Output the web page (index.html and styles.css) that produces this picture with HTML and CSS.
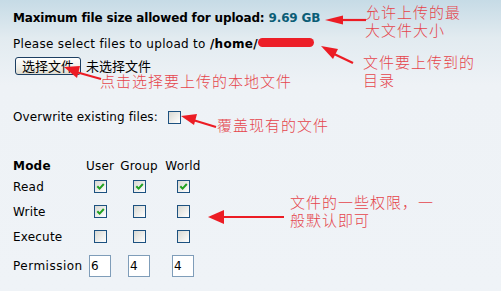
FILE: index.html
```html
<!DOCTYPE html>
<html lang="zh-CN">
<head>
    <meta charset="UTF-8">
    <meta name="viewport" content="width=device-width, initial-scale=1.0">
    <title>Upload files</title>
    <link rel="stylesheet" href="styles.css">
</head>
<body>
    <div class="upload-form">
        <p class="max-size">Maximum file size allowed for upload: <span class="size-value">9.69 GB</span></p>
        <p class="target">Please select files to upload to <strong>/home/<span class="masked"></span></strong></p>
        <div class="file-row">
            <span class="file-button">选择文件</span>
            <span class="file-name">未选择文件</span>
        </div>

        <div class="overwrite">
            <span>Overwrite existing files:</span>
            <span class="cb"></span>
        </div>

        <div class="perm-grid">
            <span class="mode-label">Mode</span>
            <span class="col-head">User</span>
            <span class="col-head">Group</span>
            <span class="col-head">World</span>

            <span>Read</span>
            <span class="cell"><span class="cb checked"><svg viewBox="0 0 11 11"><polyline points="2.3,5.2 4.6,7.6 8.8,3"/></svg></span></span>
            <span class="cell"><span class="cb checked"><svg viewBox="0 0 11 11"><polyline points="2.3,5.2 4.6,7.6 8.8,3"/></svg></span></span>
            <span class="cell"><span class="cb checked"><svg viewBox="0 0 11 11"><polyline points="2.3,5.2 4.6,7.6 8.8,3"/></svg></span></span>

            <span>Write</span>
            <span class="cell"><span class="cb checked"><svg viewBox="0 0 11 11"><polyline points="2.3,5.2 4.6,7.6 8.8,3"/></svg></span></span>
            <span class="cell"><span class="cb"></span></span>
            <span class="cell"><span class="cb"></span></span>

            <span>Execute</span>
            <span class="cell"><span class="cb"></span></span>
            <span class="cell"><span class="cb"></span></span>
            <span class="cell"><span class="cb"></span></span>

            <span class="perm-label">Permission</span>
            <span class="cell"><span class="num-box">6</span></span>
            <span class="cell"><span class="num-box">4</span></span>
            <span class="cell"><span class="num-box">4</span></span>
        </div>
    </div>

    <!-- annotations drawn over the screenshot -->
    <div class="notes">
        <span class="note note-size">允许上传的最<br>大文件大小</span>
        <span class="note note-dir">文件要上传到的<br>目录</span>
        <span class="note note-pick">点击选择要上传的本地文件</span>
        <span class="note note-over">覆盖现有的文件</span>
        <span class="note note-perm">文件的一些权限，一<br>般默认即可</span>
        <svg class="arrows" width="501" height="291" viewBox="0 0 501 291">
            <line x1="340" y1="20" x2="366" y2="20"/>
            <polygon points="325,20 343,15.5 343,24.5"/>

            <line x1="332" y1="53" x2="353" y2="63"/>
            <polygon points="321,46 338,49 333,59"/>

            <line x1="76" y1="72" x2="101" y2="79"/>
            <polygon points="64,67 80,66 77,78"/>

            <line x1="193" y1="120" x2="216" y2="127"/>
            <polygon points="181,116 197,114 194,125"/>

            <line x1="220" y1="217" x2="284" y2="217"/>
            <polygon points="208,217 224,210 224,224"/>
        </svg>
    </div>
</body>
</html>
```

FILE: styles.css
```css
body {
    margin: 0;
    width: 501px;
    height: 291px;
    overflow: hidden;
    position: relative;
    font-family: "DejaVu Sans", Verdana, sans-serif;
    font-size: 12px;
    color: #000;
    background: linear-gradient(to bottom, #c6dbe6 0, #e2ebf0 38px, #eef2f6 85px, #eff3f7 100%);
}
.upload-form {
    padding: 10px 13px;
}
.upload-form p {
    margin: 0;
    line-height: 16px;
}
.max-size {
    font-weight: bold;
    letter-spacing: -0.15px;
}
.size-value {
    color: #0b5d76;
}
.target {
    margin-top: 10px !important;
    letter-spacing: 0.3px;
}
.masked {
    display: inline-block;
    width: 56px;
    height: 9px;
    border-radius: 5px;
    background-color: #ec1f28;
    vertical-align: 1px;
}
.file-row {
    display: flex;
    align-items: center;
    gap: 5px;
    margin-top: 5px;
    margin-left: 2px;
}
.file-button {
    box-sizing: border-box;
    width: 66px;
    height: 18px;
    border: 1px solid #1d3f62;
    border-radius: 3px;
    background: linear-gradient(to bottom, #ffffff, #f0efe8 60%, #dedbd0);
    font-family: "Noto Sans CJK SC", sans-serif;
    font-size: 13px;
    line-height: 16px;
    text-align: center;
}
.file-name {
    font-family: "Noto Sans CJK SC", sans-serif;
    font-size: 13px;
    line-height: 16px;
}
.overwrite {
    display: flex;
    align-items: center;
    gap: 10px;
    margin-top: 34px;
    line-height: 16px;
    letter-spacing: 0.1px;
}
.cb {
    box-sizing: border-box;
    display: inline-flex;
    align-items: center;
    justify-content: center;
    width: 13px;
    height: 13px;
    border: 1px solid #1c5180;
    background: linear-gradient(135deg, #d8d8d2, #ffffff);
}
.cb svg {
    width: 11px;
    height: 11px;
}
.cb polyline {
    fill: none;
    stroke: #21a121;
    stroke-width: 2;
}
.perm-grid {
    display: grid;
    grid-template-columns: 67px 28px 38px 38px;
    grid-template-rows: 16px 25px 25px 25px 33px;
    column-gap: 6px;
    align-items: center;
    margin-top: 33px;
    letter-spacing: 0.2px;
}
.mode-label {
    font-weight: bold;
}
.perm-label {
    letter-spacing: 0.5px;
}
.col-head {
    text-align: center;
}
.cell {
    display: flex;
    justify-content: center;
}
.num-box {
    box-sizing: border-box;
    width: 22px;
    height: 22px;
    padding-left: 1px;
    border: 1px solid #7f9db9;
    background-color: #fff;
    line-height: 20px;
}
.notes {
    position: absolute;
    left: 0;
    top: 0;
    width: 501px;
    height: 291px;
}
.note {
    position: absolute;
    font-family: "Noto Sans CJK SC", sans-serif;
    font-size: 15px;
    font-weight: 300;
    letter-spacing: 1px;
    line-height: 18px;
    color: #e5454c;
    white-space: nowrap;
}
.note-size { left: 365px; top: 3px; }
.note-dir { left: 363px; top: 53px; }
.note-pick { left: 100px; top: 72px; }
.note-over { left: 217px; top: 116px; }
.note-perm { left: 290px; top: 193px; }
.arrows {
    position: absolute;
    left: 0;
    top: 0;
}
.arrows line {
    stroke: #ec1c24;
    stroke-width: 2.2;
}
.arrows polygon {
    fill: #ec1c24;
}
```
